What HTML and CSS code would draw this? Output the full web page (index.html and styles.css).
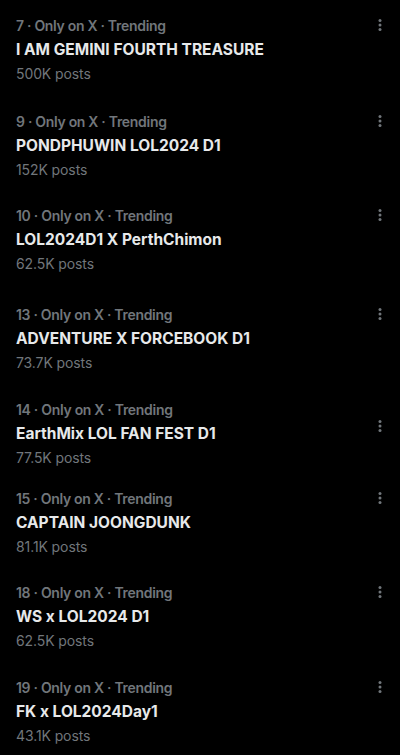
FILE: index.html
```html
<!DOCTYPE html>
<html lang="en">
<head>
  <meta charset="UTF-8">
  <title>Trending</title>
  <link rel="stylesheet" href="styles.css">
</head>
<body>
  <div class="trends">
    <div class="trend">
      <div class="trend-text">
        <div class="meta">7 · Only on X · Trending</div>
        <div class="title">I AM GEMINI FOURTH TREASURE</div>
        <div class="count">500K posts</div>
      </div>
      <div class="more"><svg viewBox="0 0 4 12" width="4" height="12"><circle cx="2" cy="1.5" r="1.5"/><circle cx="2" cy="6" r="1.5"/><circle cx="2" cy="10.5" r="1.5"/></svg></div>
    </div>
    <div class="trend">
      <div class="trend-text">
        <div class="meta">9 · Only on X · Trending</div>
        <div class="title">PONDPHUWIN LOL2024 D1</div>
        <div class="count">152K posts</div>
      </div>
      <div class="more"><svg viewBox="0 0 4 12" width="4" height="12"><circle cx="2" cy="1.5" r="1.5"/><circle cx="2" cy="6" r="1.5"/><circle cx="2" cy="10.5" r="1.5"/></svg></div>
    </div>
    <div class="trend">
      <div class="trend-text">
        <div class="meta">10 · Only on X · Trending</div>
        <div class="title">LOL2024D1 X PerthChimon</div>
        <div class="count">62.5K posts</div>
      </div>
      <div class="more"><svg viewBox="0 0 4 12" width="4" height="12"><circle cx="2" cy="1.5" r="1.5"/><circle cx="2" cy="6" r="1.5"/><circle cx="2" cy="10.5" r="1.5"/></svg></div>
    </div>
    <div class="trend">
      <div class="trend-text">
        <div class="meta">13 · Only on X · Trending</div>
        <div class="title">ADVENTURE X FORCEBOOK D1</div>
        <div class="count">73.7K posts</div>
      </div>
      <div class="more"><svg viewBox="0 0 4 12" width="4" height="12"><circle cx="2" cy="1.5" r="1.5"/><circle cx="2" cy="6" r="1.5"/><circle cx="2" cy="10.5" r="1.5"/></svg></div>
    </div>
    <div class="trend">
      <div class="trend-text">
        <div class="meta">14 · Only on X · Trending</div>
        <div class="title">EarthMix LOL FAN FEST D1</div>
        <div class="count">77.5K posts</div>
      </div>
      <div class="more more-low"><svg viewBox="0 0 4 12" width="4" height="12"><circle cx="2" cy="1.5" r="1.5"/><circle cx="2" cy="6" r="1.5"/><circle cx="2" cy="10.5" r="1.5"/></svg></div>
    </div>
    <div class="trend">
      <div class="trend-text">
        <div class="meta">15 · Only on X · Trending</div>
        <div class="title">CAPTAIN JOONGDUNK</div>
        <div class="count">81.1K posts</div>
      </div>
      <div class="more"><svg viewBox="0 0 4 12" width="4" height="12"><circle cx="2" cy="1.5" r="1.5"/><circle cx="2" cy="6" r="1.5"/><circle cx="2" cy="10.5" r="1.5"/></svg></div>
    </div>
    <div class="trend">
      <div class="trend-text">
        <div class="meta">18 · Only on X · Trending</div>
        <div class="title">WS x LOL2024 D1</div>
        <div class="count">62.5K posts</div>
      </div>
      <div class="more"><svg viewBox="0 0 4 12" width="4" height="12"><circle cx="2" cy="1.5" r="1.5"/><circle cx="2" cy="6" r="1.5"/><circle cx="2" cy="10.5" r="1.5"/></svg></div>
    </div>
    <div class="trend">
      <div class="trend-text">
        <div class="meta">19 · Only on X · Trending</div>
        <div class="title">FK x LOL2024Day1</div>
        <div class="count">43.1K posts</div>
      </div>
      <div class="more"><svg viewBox="0 0 4 12" width="4" height="12"><circle cx="2" cy="1.5" r="1.5"/><circle cx="2" cy="6" r="1.5"/><circle cx="2" cy="10.5" r="1.5"/></svg></div>
    </div>
  </div>
</body>
</html>
```

FILE: styles.css
```css
html, body {
  background: #000;
}

body {
  margin: 0;
  padding-top: 2px;
  font-family: Inter, Roboto, 'Liberation Sans', sans-serif;
  color: #e7e9ea;
  overflow: hidden;
}

.trends {
  display: flex;
  flex-direction: column;
}

.trend {
  display: flex;
  align-items: flex-start;
  padding: 12px 18px 12px 16px;
}

.trend:nth-child(2) { padding-bottom: 10px; }
.trend:nth-child(3) { padding-bottom: 15px; }
.trend:nth-child(4) { padding-bottom: 11px; }
.trend:nth-child(5) { padding-bottom: 5px; }
.trend:nth-child(6) { padding-bottom: 10px; }
.trend:nth-child(7) { padding-bottom: 11px; }

.trend-text {
  flex: 1;
}

.meta {
  font-size: 14px;
  font-weight: 600;
  line-height: 24px;
  letter-spacing: -0.3px;
  color: #71767b;
}

.title {
  font-size: 15.5px;
  font-weight: 700;
  line-height: 24px;
  color: #e7e9ea;
}

.count {
  font-size: 14px;
  line-height: 24px;
  letter-spacing: -0.1px;
  color: #71767b;
}

.more {
  margin-top: 5px;
  fill: #71767b;
  display: flex;
}

.more-low {
  margin-top: 22px;
}
```
